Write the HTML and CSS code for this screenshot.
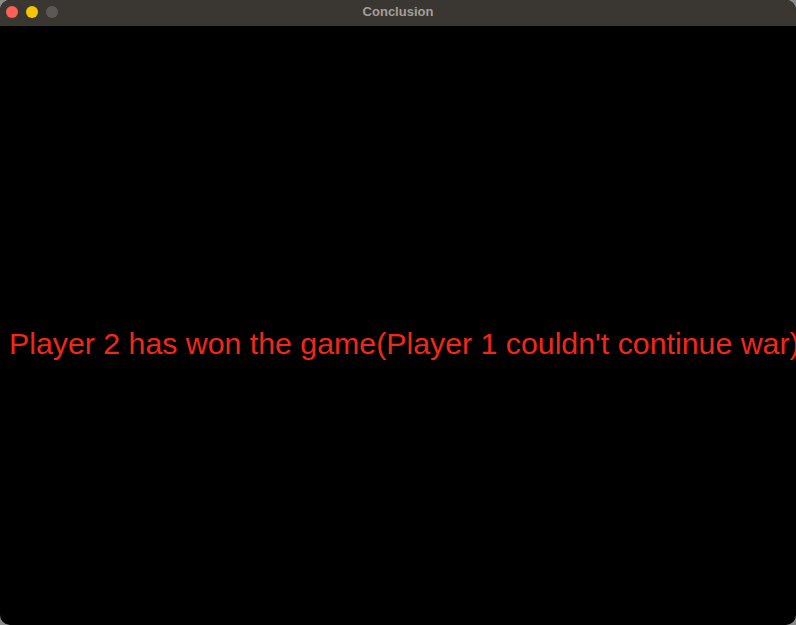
FILE: index.html
```html
<!DOCTYPE html>
<html>
<head>
<meta charset="utf-8">
<link rel="stylesheet" href="styles.css">
<title>Conclusion</title>
</head>
<body>
<div class="window">
  <div class="titlebar">
    <div class="lights">
      <span class="light red"></span>
      <span class="light yellow"></span>
      <span class="light grey"></span>
    </div>
    <div class="title">Conclusion</div>
  </div>
  <div class="content">
    <p class="message">Player 2 has won the game(Player 1 couldn't continue war)</p>
  </div>
</div>
</body>
</html>
```
FILE: styles.css
```css
html, body {
  margin: 0;
  padding: 0;
  width: 796px;
  height: 625px;
  background: #8a8a8a;
  overflow: hidden;
}
.window {
  width: 796px;
  height: 625px;
  display: flex;
  flex-direction: column;
  background: #000;
  border-radius: 10px;
  overflow: hidden;
}
.titlebar {
  height: 26px;
  flex: none;
  background: #3a3632;
  display: flex;
  align-items: center;
  justify-content: center;
  position: relative;
}
.lights {
  position: absolute;
  left: 6px;
  top: 6px;
  display: flex;
  gap: 8px;
}
.light {
  width: 12px;
  height: 12px;
  border-radius: 50%;
  display: block;
}
.red { background: #fe5f57; }
.yellow { background: #f6c400; }
.grey { background: #5b5955; }
.title {
  font-family: "Liberation Sans", Arial, sans-serif;
  font-weight: bold;
  font-size: 13px;
  line-height: 16px;
  margin-top: -2px;
  color: #a39f9b;
}
.content {
  flex: 1;
  padding-top: 300px;
  padding-left: 9px;
  white-space: nowrap;
  overflow: hidden;
}
.message {
  margin: 0;
  font-family: "Liberation Sans", Arial, sans-serif;
  font-size: 30.3px;
  line-height: 36px;
  color: #f0281a;
}
```
